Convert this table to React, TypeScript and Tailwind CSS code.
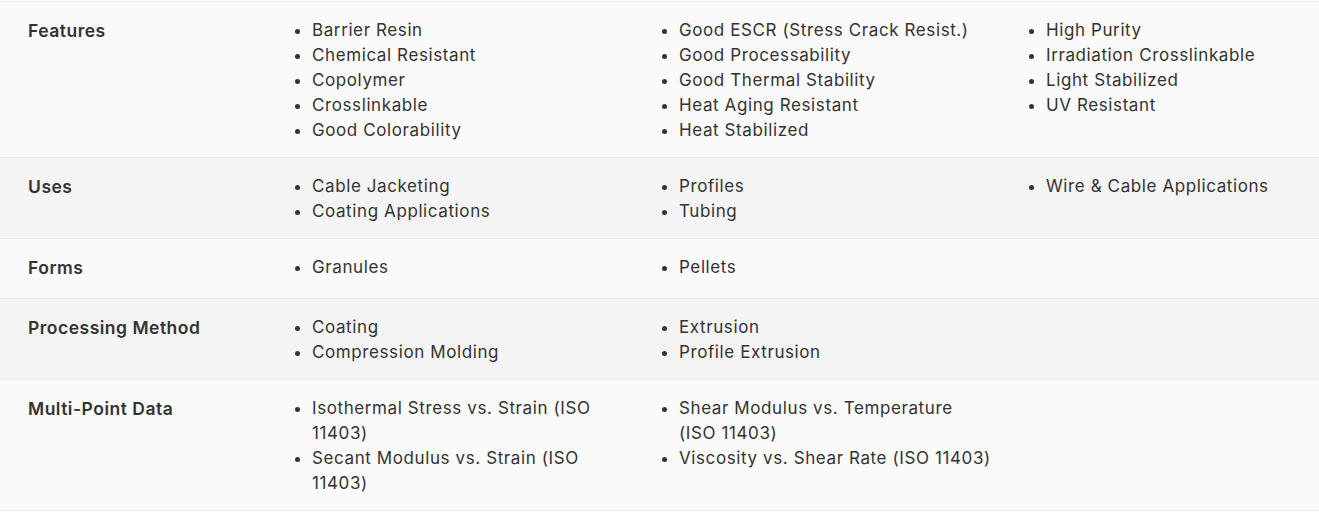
import React from "react";

type Row = { label: string; cols: string[][]; bg: string; minH?: string };

const rows: Row[] = [
  {
    label: "Features",
    bg: "bg-[#fafafa]",
    cols: [
      ["Barrier Resin", "Chemical Resistant", "Copolymer", "Crosslinkable", "Good Colorability"],
      [
        "Good ESCR (Stress Crack Resist.)",
        "Good Processability",
        "Good Thermal Stability",
        "Heat Aging Resistant",
        "Heat Stabilized",
      ],
      ["High Purity", "Irradiation Crosslinkable", "Light Stabilized", "UV Resistant"],
    ],
  },
  {
    label: "Uses",
    bg: "bg-[#f4f4f4]",
    cols: [["Cable Jacketing", "Coating Applications"], ["Profiles", "Tubing"], ["Wire & Cable Applications"]],
  },
  {
    label: "Forms",
    bg: "bg-[#fafafa]",
    minH: "min-h-[60px]",
    cols: [["Granules"], ["Pellets"], []],
  },
  {
    label: "Processing Method",
    bg: "bg-[#f4f4f4]",
    cols: [["Coating", "Compression Molding"], ["Extrusion", "Profile Extrusion"], []],
  },
  {
    label: "Multi-Point Data",
    bg: "bg-[#fafafa]",
    cols: [
      ["Isothermal Stress vs. Strain (ISO 11403)", "Secant Modulus vs. Strain (ISO 11403)"],
      ["Shear Modulus vs. Temperature (ISO 11403)", "Viscosity vs. Shear Rate (ISO 11403)"],
      [],
    ],
  },
];

export default function App() {
  return (
    <div
      className="w-[1319px] h-[514px] overflow-hidden bg-white pt-px text-[#333333]"
      style={{ fontFamily: "Inter, 'Noto Sans', sans-serif" }}
    >
      <div className="border-t border-[#ececec] bg-[#fafafa]">
        {rows.map((r) => (
          <div
            key={r.label}
            className={`grid grid-cols-[284px_367px_367px_1fr] border-b border-[#ebebeb] pt-[16px] pb-[14px] ${r.bg} ${r.minH ?? ""}`}
          >
            <div className="pl-7 text-[17.5px] leading-[25px] font-semibold tracking-[0.5px] text-[#333333]">
              {r.label}
            </div>
            {r.cols.map((c, i) => (
              <ul
                key={i}
                className="list-disc pl-7 w-[342px] text-[17px] leading-[25px] tracking-[0.6px] marker:text-[#333333]"
              >
                {c.map((t) => (
                  <li key={t}>{t}</li>
                ))}
              </ul>
            ))}
          </div>
        ))}
      </div>
    </div>
  );
}
